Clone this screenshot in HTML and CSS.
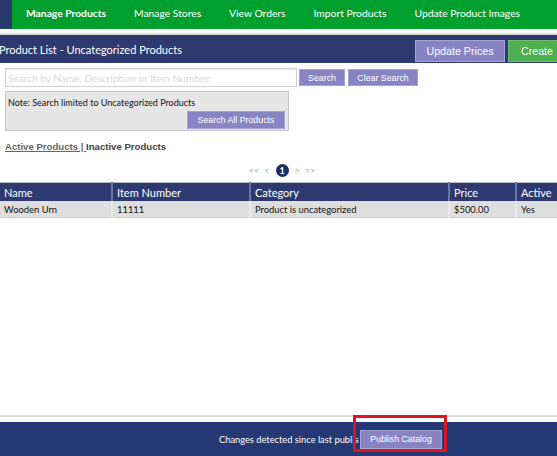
FILE: index.html
```html
<!DOCTYPE html>
<html>
<head>
<meta charset="utf-8">
<link rel="stylesheet" href="styles.css">
</head>
<body>
<div class="page">
  <nav class="nav">
    <a class="nav-item active">Manage Products</a>
    <a class="nav-item">Manage Stores</a>
    <a class="nav-item">View Orders</a>
    <a class="nav-item">Import Products</a>
    <a class="nav-item">Update Product Images</a>
  </nav>
  <div class="divider"></div>
  <div class="titlebar">
    <h1 class="title">Product List - Uncategorized Products</h1>
    <div class="title-actions">
      <button class="btn btn-lav btn-lg">Update Prices</button>
      <button class="btn btn-green btn-lg">Create</button>
    </div>
  </div>
  <div class="search-row">
    <input class="search-input" type="text" placeholder="Search by Name, Description or Item Number:">
    <button class="btn btn-lav btn-sm">Search</button>
    <button class="btn btn-lav btn-sm btn-clear">Clear Search</button>
  </div>
  <div class="note">
    <div class="note-text">Note: Search limited to Uncategorized Products</div>
    <div class="note-actions"><button class="btn btn-lav btn-sm btn-all">Search All Products</button></div>
  </div>
  <div class="tabs"><a class="tab-link">Active Products | </a><span class="tab-current">Inactive Products</span></div>
  <div class="pager">
    <span class="pg">&lt;&lt;</span>
    <span class="pg">&lt;</span>
    <span class="pg-num">1</span>
    <span class="pg">&gt;</span>
    <span class="pg">&gt;&gt;</span>
  </div>
  <table class="grid">
    <thead>
      <tr><th class="c-name">Name</th><th class="c-item">Item Number</th><th class="c-cat">Category</th><th class="c-price">Price</th><th class="c-act">Active</th></tr>
    </thead>
    <tbody>
      <tr><td>Wooden Urn</td><td>11111</td><td>Product is uncategorized</td><td>$500.00</td><td>Yes</td></tr>
    </tbody>
  </table>
  <div class="spacer"></div>
  <footer class="footer">
    <span class="footer-text">Changes detected since last publish</span>
    <button class="btn btn-lav btn-sm btn-publish">Publish Catalog</button>
    <div class="highlight"></div>
  </footer>
</div>
</body>
</html>
```

FILE: styles.css
```css
html, body {
  margin: 0;
  padding: 0;
  overflow: hidden;
  background: #ffffff;
}
.page {
  width: 566px;
  height: 456px;
  display: flex;
  flex-direction: column;
  font-family: Lato, "Liberation Sans", sans-serif;
  position: relative;
}
.nav {
  height: 29px;
  background: #00a02f;
  border-left: 12px solid #2a3a6e;
  display: flex;
  align-items: center;
  padding-bottom: 3px;
  box-sizing: border-box;
}
.nav-item {
  color: #ffffff;
  font-size: 10.3px;
  padding: 0 14px;
  white-space: nowrap;
}
.nav-item.active { font-weight: bold; }
.divider {
  height: 4px;
  border-bottom: 2px solid #dcdcdc;
}
.titlebar {
  height: 28px;
  background: #2e3a6f;
  display: flex;
  justify-content: space-between;
  align-items: flex-end;
  padding-bottom: 1px;
  box-sizing: border-box;
}
.title {
  margin: 0 0 6px -1px;
  font-size: 11px;
  font-weight: normal;
  color: #ffffff;
  white-space: nowrap;
}
.title-actions { display: flex; gap: 3px; }
.btn {
  font-family: "Liberation Sans", Arial, sans-serif;
  color: #ffffff;
  border: 1px solid #a5a2d6;
  padding: 0;
  cursor: pointer;
}
.btn-lav { background: #8884c4; }
.btn-green { background: #4caf50; border-color: #6cc070; }
.btn-lg {
  height: 22px;
  font-size: 10.7px;
}
.btn-lav.btn-lg { width: 90px; }
.btn-green.btn-lg { width: 58px; }
.btn-sm {
  font-size: 8.8px;
  height: 17px;
}
.search-row {
  display: flex;
  align-items: center;
  padding: 5px 0 0 5px;
  gap: 2px;
}
.search-input {
  width: 292px;
  height: 19px;
  box-sizing: border-box;
  border: 1px solid #d0d0d0;
  box-shadow: inset 0 1px 1px #e4e4e4;
  font-family: Lato, sans-serif;
  font-size: 10.1px;
  padding: 0 2px;
  margin: 0;
}
.search-input::placeholder { color: #dadada; }
.search-row .btn-sm { width: 46px; }
.search-row .btn-clear { width: 70px; margin-left: 1px; }
.note {
  margin: 4px 0 0 5px;
  width: 284px;
  height: 40px;
  box-sizing: border-box;
  background: #e6e6e6;
  border: 1px solid #c8c8c8;
  padding: 5px 3px 0 2px;
  display: flex;
  flex-direction: column;
}
.note-text {
  font-size: 9px;
  color: #111111;
  line-height: 12px;
}
.note-actions {
  display: flex;
  justify-content: flex-end;
  margin-top: 2px;
}
.btn-all { width: 98px; height: 18px; }
.tabs {
  margin: 10px 0 0 5px;
  font-family: "Liberation Sans", Arial, sans-serif;
  font-size: 9.6px;
  font-weight: bold;
  line-height: 12px;
}
.tab-link { color: #666666; text-decoration: underline; }
.tab-current { color: #444444; }
.pager {
  display: flex;
  justify-content: center;
  align-items: center;
  gap: 5px;
  margin-top: 10px;
  height: 14px;
  font-size: 9px;
  color: #aaaaaa;
  padding-right: 2px;
}
.pg-num {
  width: 13px;
  height: 13px;
  border-radius: 50%;
  background: #1e2f66;
  color: #ffffff;
  font-weight: bold;
  font-size: 9px;
  display: flex;
  align-items: center;
  justify-content: center;
  margin: 0 1px;
}
.grid {
  margin-top: 5px;
  border-collapse: collapse;
  width: 566px;
  table-layout: fixed;
  border-top: 1px solid #b8bcc8;
}
.grid th {
  background: #2e3a6f;
  color: #ffffff;
  font-weight: normal;
  font-size: 11px;
  text-align: left;
  height: 18px;
  padding: 0 4px;
  border-left: 2px solid #6c76a4;
}
.grid th:first-child { border-left: none; }
.grid td {
  background: #dedede;
  font-size: 9.4px;
  color: #111111;
  height: 16px;
  padding: 0 4px;
  border-left: 2px solid #eaeaea;
  border-bottom: 1px solid #cfcfcf;
}
.grid td:first-child { border-left: none; }
.c-name { width: 103px; }
.c-item { width: 128px; }
.c-cat { width: 189px; }
.c-price { width: 57px; }
.spacer { flex: 1; border-bottom: 2px solid #dcdcdc; }
.footer {
  margin-top: 5px;
  height: 34px;
  background: #243873;
  display: flex;
  align-items: center;
  padding-left: 219px;
  position: relative;
}
.footer-text {
  color: #ffffff;
  font-size: 9.3px;
  white-space: nowrap;
  max-width: 140px;
  overflow: hidden;
}
.btn-publish {
  width: 82px;
  height: 19px;
  margin-left: 1px;
}
.highlight {
  position: absolute;
  left: 353px;
  top: -7px;
  width: 94px;
  height: 37px;
  box-sizing: border-box;
  border: 3px solid #e0141c;
}
```
